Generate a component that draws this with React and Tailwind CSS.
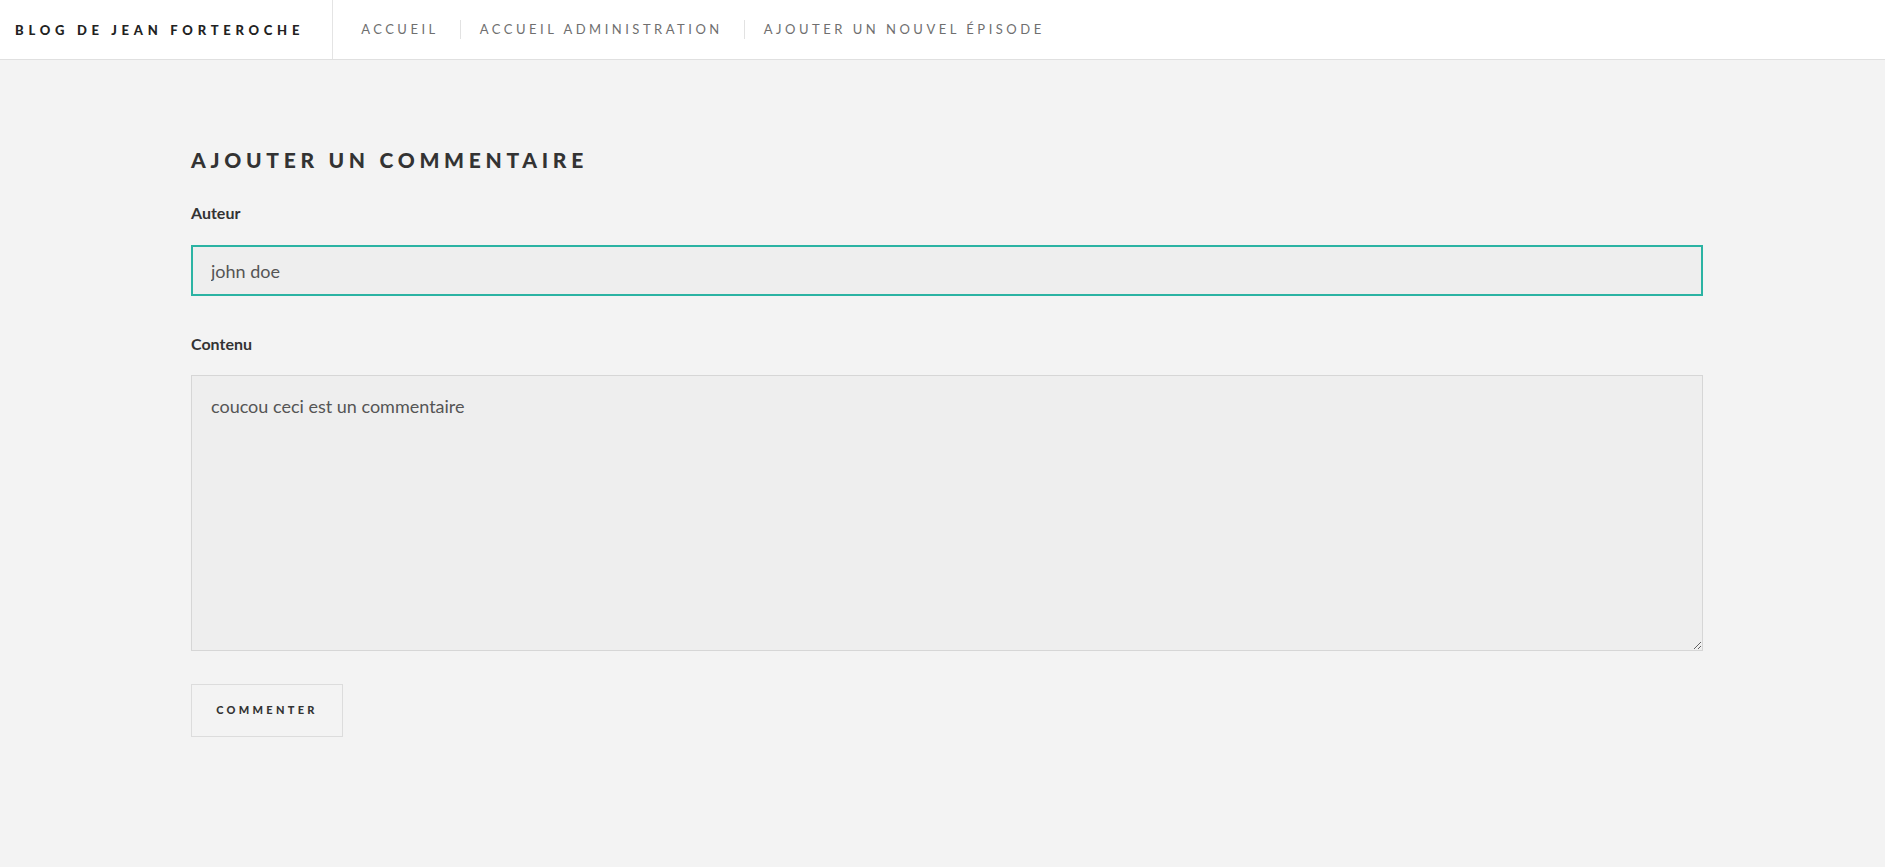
import React from 'react';

const nav = ['Accueil', 'Accueil administration', 'Ajouter un nouvel épisode'];

export default function App() {
  return (
    <div className="min-h-[867px] bg-[#f3f3f3] font-['Lato',sans-serif]">
      <header className="flex h-[60px] items-stretch border-b border-[#e0e0e0] bg-white">
        <div className="flex items-center border-r border-[#e4e4e4] pl-[15px] pr-[28px] pt-[2px]">
          <span className="text-[13px] font-black uppercase tracking-[4.75px] text-[#222]">Blog de Jean Forteroche</span>
        </div>
        <nav className="flex items-center pl-[28px]">
          {nav.map((n, i) => (
            <div key={n} className="flex items-center">
              {i > 0 && <span className="mr-[19px] ml-[21px] h-[19px] w-px bg-[#e2e2e2]" />}
              <span className="text-[13px] font-normal uppercase tracking-[3.5px] text-[#6f6f6f]">{n}</span>
            </div>
          ))}
        </nav>
      </header>

      <main className="ml-[191px] w-[1512px] pt-[86px]">
        <h2 className="text-[21px] font-black uppercase leading-[28px] tracking-[4.7px] text-[#333]">Ajouter un commentaire</h2>

        <label className="mt-[29px] block text-[16px] font-bold leading-[20px] text-[#333]">Auteur</label>
        <input
          autoFocus
          defaultValue="john doe"
          className="mt-[22px] block h-[51px] w-full border-2 border-[#2bb3a3] bg-[#eeeeee] px-[18px] text-[18px] text-[#555] outline-none"
        />

        <label className="mt-[38px] block text-[16px] font-bold leading-[20px] text-[#333]">Contenu</label>
        <textarea
          defaultValue="coucou ceci est un commentaire"
          className="mt-[21px] block h-[276px] w-full border border-[#d6d6d6] bg-[#eeeeee] px-[19px] py-[17px] text-[18px] text-[#555] outline-none"
        />

        <button className="mt-[33px] h-[53px] w-[152px] border border-[#dcdcdc] text-[11px] font-black uppercase tracking-[3.3px] text-[#333]">
          Commenter
        </button>
      </main>
    </div>
  );
}
